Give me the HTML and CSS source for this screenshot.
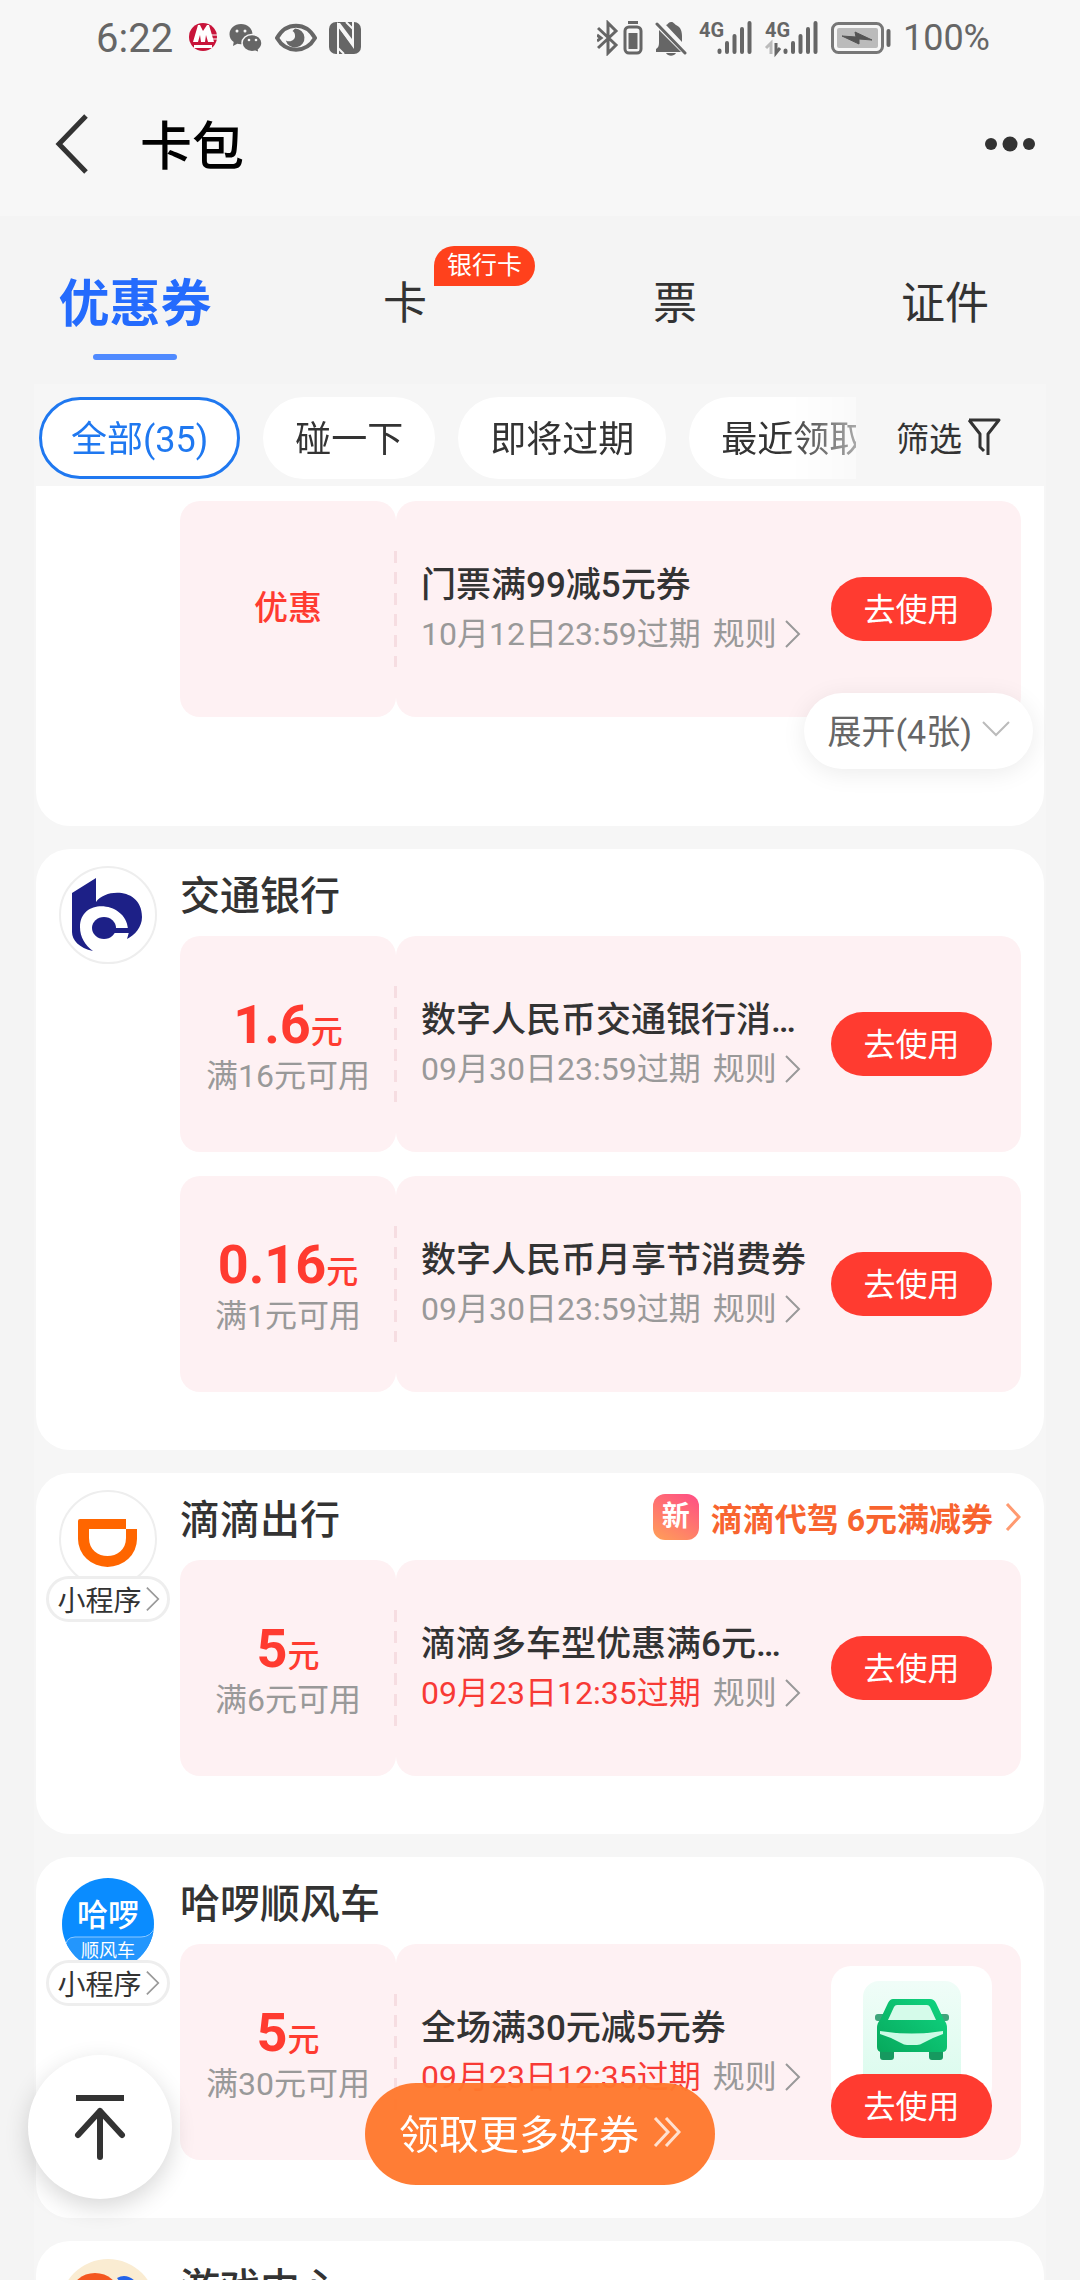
FILE: index.html
```html
<!DOCTYPE html>
<html lang="zh-CN">
<head>
<meta charset="utf-8">
<meta name="viewport" content="width=device-width, initial-scale=1">
<title>卡包</title>
<link rel="stylesheet" href="styles.css">
</head>
<body>
<svg class="defs" aria-hidden="true">
  <symbol id="chevron" viewBox="0 0 16 28"><path d="M1 1l13 13L1 27" fill="none" stroke="currentColor" stroke-width="2"/></symbol>
  <symbol id="signal" viewBox="0 0 36 36">
    <g stroke="currentColor" stroke-width="4" stroke-linecap="round"><path d="M2.500 30.500v1.500M10 23v9M17.500 16v16M25 9v23M32.500 3v29"/></g>
  </symbol>
</svg>
<div class="app">
  <header class="top">
    <div class="status">
      <div class="status-side">
        <span class="clock">6:22</span>
        <svg width="28" height="32" viewBox="0 0 28 32">
          <circle cx="14" cy="15" r="14" fill="#c8143a"/>
          <path d="M4 20L9 3h2l3 6 4-6h2l5 17h-6l-2-7-1 7h-4l-1-7-2 7z" fill="#fff"/>
          <path d="M5 24.500h18" stroke="#fff" stroke-width="3"/>
          <path d="M21 13h7M22 17h6" stroke="#fff"/>
        </svg>
        <svg width="34" height="32" viewBox="0 0 34 32" fill="#666">
          <path d="M12 2C5.500 2 .5 6.500.5 12.200c0 3.200 1.600 6 4.200 7.800L4 24l4.300-2.300c1 .3 2.200.5 3.700.5 6.500 0 11.500-4.500 11.500-10S18.500 2 12 2z"/>
          <path d="M23 12.500c-5.600 0-10 3.900-10 8.600s4.400 8.600 10 8.600c1.200 0 2.300-.2 3.300-.5L30.500 31l-1-3.200c2.100-1.600 3.500-4 3.500-6.700 0-4.700-4.400-8.600-10-8.600z" stroke="#f7f7f7" stroke-width="1.500"/>
          <g fill="#f7f7f7"><circle cx="8" cy="9" r="1.500"/><circle cx="16" cy="9" r="1.500"/><circle cx="20" cy="18" r="1.300"/><circle cx="27" cy="18" r="1.300"/></g>
        </svg>
        <svg width="42" height="32" viewBox="0 0 42 32">
          <path d="M2 16C11-.5 31-.5 40 16 31 31.500 11 31.500 2 16z" fill="none" stroke="#666" stroke-width="4"/>
          <path d="M20 6.500a9.500 9.500 0 1 1-9.200 12c5 2.500 9.700-1 9.200-5 0-2.500-1-3.500-2.500-4.500z" fill="#666"/>
        </svg>
        <svg width="32" height="32" viewBox="0 0 32 32">
          <rect width="32" height="32" rx="7" fill="#666"/>
          <path d="M9 32V3l15 21V0M9 10v16l6 6M17 0l7 7" fill="none" stroke="#f7f7f7" stroke-width="2"/>
          <path d="M8 1l3 0 12 16v6L9 5z" fill="#f7f7f7"/>
        </svg>
      </div>
      <div class="status-side">
        <svg width="46" height="36" viewBox="0 0 46 36" fill="none" stroke="#666" stroke-width="3">
          <path d="M1 8l18 17-8 8V3l8 8L1 28M0 15l4 3-4 3"/>
          <rect x="28" y="7" width="16" height="26" rx="4"/><path d="M31 2.500h10"/><path d="M31.500 13h9v16h-9z" fill="#666" stroke="none"/>
        </svg>
        <svg width="32" height="36" viewBox="0 0 32 36" fill="#666">
          <path d="M4 10L26 32H1v-3c2-1 3-3 3-6zM11 5c2 0 2-3 5-3s3 2 5 3c5 2 6 7 6 11v6z"/>
          <path d="M11 33h10c-2 3.500-8 3.500-10 0z"/><path d="M2 4l28 29" stroke="#666" stroke-width="3" stroke-linecap="round"/>
        </svg>
        <svg class="net" width="54" height="36" viewBox="0 0 54 36"><text x="0" y="17">4G</text><use href="#signal" x="18" width="36" height="36"/></svg>
        <svg class="net" width="54" height="36" viewBox="0 0 54 36"><text x="0" y="17">4G</text><path d="M1 28l5-5v11" fill="none" stroke="#bbb" stroke-width="3"/><path d="M11 23v10l4-5" fill="none" stroke="#666" stroke-width="3"/><use href="#signal" x="18" width="36" height="36"/></svg>
        <svg width="60" height="32" viewBox="0 0 60 32">
          <rect x="1.500" y="1.500" width="50" height="29" rx="6" fill="none" stroke="#777" stroke-width="3"/>
          <rect x="6" y="6" width="41" height="20" rx="2" fill="#bbb"/>
          <path d="M11 14l14 1-1-5 17 8-13-1 0 5z" fill="#555" stroke="#555"/>
          <path d="M57.500 9v14" stroke="#666" stroke-width="4" stroke-linecap="round"/>
        </svg>
        <span class="battery-level">100%</span>
      </div>
    </div>
    <div class="nav">
      <button class="icon-btn" aria-label="返回"><svg width="36" height="60" viewBox="0 0 36 60"><path d="M32 2L5 30l27 28" fill="none" stroke="#333" stroke-width="5"/></svg></button>
      <h1>卡包</h1>
      <button class="icon-btn more" aria-label="更多"><svg width="52" height="20" viewBox="0 0 52 20" fill="#333"><circle cx="7" cy="10" r="6"/><circle cx="26" cy="10" r="7.500"/><circle cx="45" cy="10" r="6"/></svg></button>
    </div>
  </header>

  <nav class="tabs">
    <button class="tab active">优惠券</button>
    <button class="tab">卡<span class="badge">银行卡</span></button>
    <button class="tab">票</button>
    <button class="tab">证件</button>
  </nav>

  <main class="content">
    <div class="filters">
      <div class="chips">
        <button class="chip selected">全部(35)</button>
        <button class="chip">碰一下</button>
        <button class="chip">即将过期</button>
        <button class="chip">最近领取</button>
      </div>
      <button class="filter-btn">筛选<svg width="34" height="38" viewBox="0 0 34 38"><path d="M2 2h30L21 16v21M2 2l11 14v13l4 4" fill="none" stroke="#333" stroke-width="3" stroke-linejoin="round"/></svg></button>
    </div>

    <section class="card first">
      <div class="brand"></div>
      <div class="coupons">
        <article class="coupon">
          <div class="value"><span class="kind">优惠</span></div>
          <div class="detail">
            <div class="info"><h3>门票满99减5元券</h3><p><span>10月12日23:59过期</span><a href="#">规则<svg class="chev"><use href="#chevron"/></svg></a></p></div>
            <div class="action"><button class="use">去使用</button></div>
          </div>
        </article>
      </div>
      <button class="expand">展开(4张)<svg width="28" height="16" viewBox="0 0 28 16"><path d="M1 1l13 13L27 1" fill="none" stroke="#bbb" stroke-width="2"/></svg></button>
    </section>

    <section class="card">
      <div class="brand">
        <svg class="logo" viewBox="0 0 98 98">
          <circle cx="49" cy="49" r="48" fill="#fff" stroke="#eee" stroke-width="2"/>
          <path d="M13 27L37 12v24c10-14 46-14 46 15 0 10-7 18-15 22l2-7H56v-3h13C67 35 21 31 21 61c0 10 5 18 13 24C20 82 13 74 13 66z" fill="#1d2087"/>
          <ellipse cx="45" cy="62" rx="12" ry="11" fill="#1d2087"/><path d="M50 62h20v5H50z" fill="#1d2087"/>
        </svg>
      </div>
      <div class="coupons">
        <header class="card-head"><h2>交通银行</h2></header>
        <article class="coupon">
          <div class="value"><strong>1.6<small>元</small></strong><span class="limit">满16元可用</span></div>
          <div class="detail">
            <div class="info"><h3>数字人民币交通银行消费券</h3><p><span>09月30日23:59过期</span><a href="#">规则<svg class="chev"><use href="#chevron"/></svg></a></p></div>
            <div class="action"><button class="use">去使用</button></div>
          </div>
        </article>
        <article class="coupon">
          <div class="value"><strong>0.16<small>元</small></strong><span class="limit">满1元可用</span></div>
          <div class="detail">
            <div class="info"><h3>数字人民币月享节消费券</h3><p><span>09月30日23:59过期</span><a href="#">规则<svg class="chev"><use href="#chevron"/></svg></a></p></div>
            <div class="action"><button class="use">去使用</button></div>
          </div>
        </article>
      </div>
    </section>

    <section class="card">
      <div class="brand">
        <svg class="logo" viewBox="0 0 98 98">
          <circle cx="49" cy="49" r="48" fill="#fff" stroke="#eee" stroke-width="2"/>
          <path d="M21 29h46v10h11v10a29.500 28 0 0 1-59 0V31a2 2 0 0 1 2-2zM30 39v9c0 24 37 24 37 0v-9z" fill="#ff6600" fill-rule="evenodd"/>
        </svg>
        <a class="mini" href="#">小程序<svg width="14" height="26" viewBox="0 0 16 28"><use href="#chevron"/></svg></a>
      </div>
      <div class="coupons">
        <header class="card-head"><h2>滴滴出行</h2>
          <a class="promo" href="#"><span class="new">新</span><span>滴滴代驾 6元满减券</span><svg class="promo-chev" viewBox="0 0 16 28"><path d="M2 1l12 13L2 27" fill="none" stroke="#ff9a70" stroke-width="3"/></svg></a>
        </header>
        <article class="coupon">
          <div class="value"><strong>5<small>元</small></strong><span class="limit">满6元可用</span></div>
          <div class="detail">
            <div class="info"><h3>滴滴多车型优惠满6元减5元券</h3><p><span class="soon">09月23日12:35过期</span><a href="#">规则<svg class="chev"><use href="#chevron"/></svg></a></p></div>
            <div class="action"><button class="use">去使用</button></div>
          </div>
        </article>
      </div>
    </section>

    <section class="card">
      <div class="brand">
        <svg class="logo" viewBox="0 0 98 98">
          <defs><clipPath id="hello"><circle cx="49" cy="50" r="46"/></clipPath></defs>
          <circle cx="49" cy="50" r="46" fill="#0a8cff"/>
          <g clip-path="url(#hello)"><path d="M6 98V72q0-9 10-9h66q10 0 14-7v42z" fill="#2396fd"/><path d="M6 76q0-13 10-13h66q10 0 14-10" fill="none" stroke="#8cc8ff"/></g>
          <text class="logo-main" x="49" y="52">哈啰</text><text class="logo-sub" x="49" y="83">顺风车</text>
        </svg>
        <a class="mini" href="#">小程序<svg width="14" height="26" viewBox="0 0 16 28"><use href="#chevron"/></svg></a>
      </div>
      <div class="coupons">
        <header class="card-head"><h2>哈啰顺风车</h2></header>
        <article class="coupon">
          <div class="value"><strong>5<small>元</small></strong><span class="limit">满30元可用</span></div>
          <div class="detail">
            <div class="info"><h3>全场满30元减5元券</h3><p><span class="soon">09月23日12:35过期</span><a href="#">规则<svg class="chev"><use href="#chevron"/></svg></a></p></div>
            <div class="action">
              <div class="tile">
                <svg width="98" height="98" viewBox="0 0 98 98">
                  <defs>
                    <linearGradient id="mint" x2="0" y2="1"><stop stop-color="#f0fdf8"/><stop offset="1" stop-color="#d8fbec"/></linearGradient>
                    <linearGradient id="body" x1="0" y1="1" x2="1" y2="0"><stop stop-color="#07a85c"/><stop offset="1" stop-color="#10d581"/></linearGradient>
                  </defs>
                  <rect width="98" height="120" rx="16" fill="url(#mint)"/>
                  <rect x="12" y="33" width="74" height="7" rx="3" fill="#3fa57c"/>
                  <path d="M17 68h14v8q0 3-3 3h-8q-3 0-3-3zM66 68h14v8q0 3-3 3h-8q-3 0-3-3z" fill="#16995f"/>
                  <path d="M30 18h37q4 0 6 4l8 17q3 3 3 8v19q0 5-5 5H19q-5 0-5-5V47q0-5 3-8l8-17q2-4 5-4z" fill="url(#body)"/>
                  <path d="M34 24h30q2 0 3 2l6 13H25l6-13q1-2 3-2z" fill="#d5fbea"/>
                  <path d="M17 50q32 5 63 0v3L70 57 60 62q-3 2-6 2H44q-3 0-6-2L28 57l-11-4z" fill="#cdfbe6"/>
                </svg>
              </div>
              <button class="use">去使用</button>
            </div>
          </div>
        </article>
      </div>
    </section>

    <section class="card">
      <div class="brand">
        <svg class="logo" viewBox="0 0 98 98">
          <circle cx="49" cy="49" r="48" fill="#faecd2"/>
          <ellipse cx="36" cy="36" rx="24" ry="21" fill="#f4571f"/><path d="M58 20q14-8 28 16l-10 10z" fill="#2463e8"/>
        </svg>
      </div>
      <div class="coupons"><header class="card-head"><h2>游戏中心</h2></header></div>
    </section>
  </main>

  <button class="to-top" aria-label="回到顶部"><svg width="54" height="68" viewBox="0 0 54 68" fill="none" stroke="#333" stroke-width="6"><path d="M3 5h48"/><path d="M5 42l22-24 22 24M27 18v46" stroke-linecap="round" stroke-linejoin="round"/></svg></button>
  <button class="more-coupons">领取更多好券<svg width="28" height="30" viewBox="0 0 28 30"><path d="M2 1l13 14L2 29M13 1l13 14-13 14" fill="none" stroke="#ffe0cf" stroke-width="3"/></svg></button>
</div>
</body>
</html>
```

FILE: styles.css
```css
* { box-sizing: border-box; margin: 0; padding: 0; }
body { background: #f4f4f4; color: #333; font-family: Roboto, "Noto Sans CJK SC", sans-serif; }
button { border: 0; background: none; font: inherit; color: inherit; }
a { color: inherit; text-decoration: none; }
svg { display: block; flex: none; }
.defs { position: absolute; width: 0; height: 0; }

.app { height: 100vh; display: flex; flex-direction: column; overflow: hidden; }

.top { flex: none; background: #f7f7f7; }
.status { height: 76px; padding: 0 90px 0 96px; display: flex; justify-content: space-between; align-items: center; color: #666; }
.status-side { display: flex; align-items: center; gap: 12px; }
.clock { margin-right: 4px; font-size: 40px; }
.battery-level { font-size: 36px; }
.net { overflow: visible; }
.net text { font: bold 20px "Liberation Sans Narrow", Roboto, sans-serif; fill: #666; }
.nav { height: 140px; padding: 0 44px 4px 54px; display: flex; align-items: center; }
.nav h1 { margin-left: 50px; padding-top: 8px; font-size: 52px; font-weight: 500; color: #000; line-height: 76px; }
.icon-btn.more { margin-left: auto; }

.tabs { flex: none; height: 168px; display: grid; grid-template-columns: repeat(4, 1fr); }
.tab { position: relative; font-size: 44px; }
.tab.active { font-size: 51px; font-weight: 700; color: #246bfd; }
.tab.active::after { content: ""; position: absolute; left: calc(50% - 42px); bottom: 24px; width: 84px; height: 6px; border-radius: 3px; background: #4f8aff; }
.badge { position: absolute; left: calc(50% + 29px); top: 30px; padding: 0 13px; border-radius: 20px 20px 20px 0; background: #ff411c; color: #fff; font-size: 25px; line-height: 40px; }

.content { flex: 1; min-height: 0; margin: 0 34px; padding: 0 2px; overflow: hidden; background: #f6f6f6; }
.filters { height: 102px; padding: 13px 43px 7px 3px; display: flex; align-items: center; }
.chips { flex: 1; min-width: 0; display: flex; gap: 23px; overflow: hidden; -webkit-mask-image: linear-gradient(to right, #000 calc(100% - 72px), rgba(0, 0, 0, .4)); mask-image: linear-gradient(to right, #000 calc(100% - 72px), rgba(0, 0, 0, .4)); }
.chip { flex: none; height: 82px; padding: 0 32px 5px; border-radius: 41px; background: #fff; font-size: 36px; }
.chip.selected { border: 3px solid #1f78f0; padding: 0 29px 5px; color: #1f78f0; }
.filter-btn { margin-left: 40px; padding-bottom: 2px; display: flex; align-items: center; gap: 5px; font-size: 33px; }

.card { position: relative; display: grid; grid-template-columns: 144px 1fr; margin-bottom: 23px; padding: 0 23px 58px 0; border-radius: 34px; background: #fff; }
.card.first { padding: 15px 23px 109px 0; border-radius: 0 0 34px 34px; }
.brand { display: flex; flex-direction: column; align-items: center; padding-top: 17px; }
.logo { width: 98px; height: 98px; }
.logo-main { font-size: 31px; font-weight: 500; fill: #fff; text-anchor: middle; }
.logo-sub { font-size: 18px; fill: #fff; text-anchor: middle; }
.mini { display: flex; align-items: center; gap: 4px; height: 46px; margin-top: -12px; padding: 0 7px 0 8px; border: 3px solid #eee; border-radius: 23px; background: #fff; font-size: 28px; color: #333; z-index: 1; }
.mini svg { color: #999; }

.coupons { display: flex; flex-direction: column; gap: 24px; min-width: 0; }
.card-head { display: flex; justify-content: space-between; align-items: center; height: 58px; margin: 15px 0 -10px; }
.card-head h2 { font-size: 40px; font-weight: 500; }
.promo { display: flex; align-items: center; gap: 12px; font-size: 32px; font-weight: 700; color: #f8642f; }
.new { width: 46px; line-height: 46px; border-radius: 12px; background: linear-gradient(30deg, #ffa057, #ff4c86); color: #fff; font-size: 28px; text-align: center; }
.promo-chev { width: 16px; height: 28px; }

.coupon { display: grid; grid-template-columns: 216px 1fr; height: 216px; }
.value, .detail { border-radius: 20px; background: #fef1f3; }
.value { display: flex; flex-direction: column; align-items: center; justify-content: center; padding-top: 4px; color: #ff3b30; }
.value strong { font-size: 54px; line-height: 52px; font-weight: 700; }
.value small { font-size: 32px; font-weight: 500; }
.kind { padding-bottom: 12px; font-size: 34px; font-weight: 500; }
.limit { font-size: 32px; line-height: 36px; color: #999; }
.detail { position: relative; display: flex; align-items: center; justify-content: space-between; padding: 0 29px 0 25px; }
.detail::before { content: ""; position: absolute; left: -2px; top: 50px; width: 3px; height: 116px; background: repeating-linear-gradient(to bottom, #f6dde1 0 12px, #fef1f3 12px 21px); }
.info { width: 386px; padding-top: 2px; }
.info h3 { font-size: 35px; font-weight: 500; line-height: 48px; overflow: hidden; white-space: nowrap; text-overflow: ellipsis; }
.info p { display: flex; gap: 12px; font-size: 32px; line-height: 48px; color: #999; white-space: nowrap; }
.info a { display: flex; align-items: center; gap: 8px; }
.info .soon { color: #f83a35; }
.chev { width: 16px; height: 28px; }
.action { flex: none; width: 161px; }
.use { position: relative; display: block; width: 100%; height: 64px; padding-bottom: 4px; border-radius: 32px; background: #ff3b30; color: #fff; font-size: 32px; }
.tile { height: 140px; margin-bottom: -32px; padding-top: 15px; display: flex; justify-content: center; border-radius: 20px; background: #fff; }
.expand { position: absolute; right: 11px; bottom: 57px; display: flex; align-items: center; gap: 10px; height: 76px; padding: 0 23px 4px; border-radius: 38px; background: #fff; box-shadow: 0 4px 24px rgba(0, 0, 0, .08); color: #666; font-size: 34px; }

.to-top { position: fixed; left: 28px; bottom: 81px; width: 144px; height: 144px; display: flex; align-items: center; justify-content: center; border-radius: 50%; background: #fff; box-shadow: 0 8px 24px rgba(0, 0, 0, .16); }
.more-coupons { position: fixed; left: 50%; bottom: 95px; transform: translateX(-50%); display: flex; align-items: center; gap: 14px; height: 102px; padding: 0 34px 4px; border-radius: 51px; background: rgba(255, 120, 45, .96); color: #fff; font-size: 40px; white-space: nowrap; }
```
